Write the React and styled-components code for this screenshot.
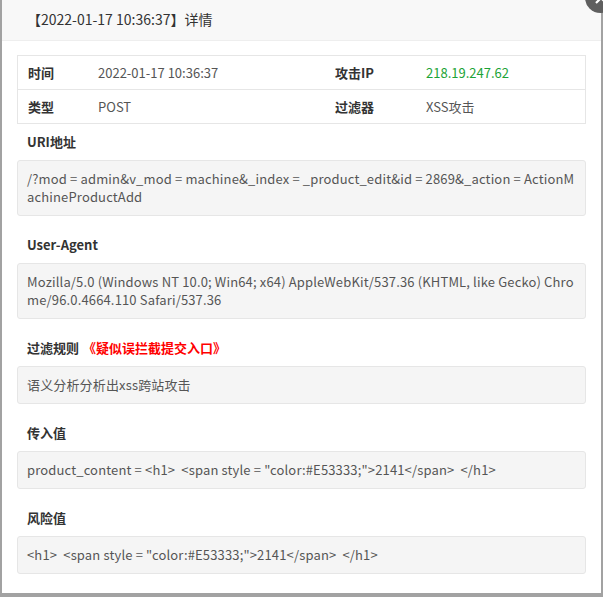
import React from "react";
import styled, { createGlobalStyle } from "styled-components";

const GlobalStyle = createGlobalStyle`
  html, body {
    margin: 0;
    padding: 0;
    background: #a2a2a2;
    font-family: "Noto Sans CJK SC", "Noto Sans", sans-serif;
    overflow: hidden;
  }
`;

const Layer = styled.div`
  position: relative;
  width: 599px;
  height: 593px;
  margin-left: 2px;
  background: #fff;
`;

const Header = styled.div`
  height: 40px;
  padding-left: 25px;
  line-height: 39px;
  font-size: 14px;
  color: #333;
  background: #f8f8f8;
  border-bottom: 1px solid #eee;
`;

const Close = styled.a`
  position: absolute;
  top: -18px;
  right: -15px;
  width: 31px;
  height: 31px;
  border-radius: 50%;
  background: #5f5f5f;
  display: flex;
  align-items: center;
  justify-content: center;
`;

const Content = styled.div`
  padding: 14px 15px;
`;

const InfoTable = styled.table`
  width: 100%;
  border-collapse: collapse;
  border: 1px solid #e6e6e6;
  font-size: 13px;
  td {
    height: 33px;
    padding: 0 10px;
    border-bottom: 1px solid #e6e6e6;
    color: #555;
  }
`;

const Th = styled.td`
  && {
    font-weight: 700;
    color: #333;
  }
`;

const Ip = styled.span`
  color: #1ca336;
`;

const Section = styled.div`
  margin-top: 11px;
  &:first-of-type {
    margin-top: 0;
  }
`;

const Label = styled.div`
  padding: 8px 10px;
  line-height: 20px;
  font-size: 13px;
  font-weight: 700;
  color: #333;
`;

const Rule = styled.span`
  margin-left: 4px;
  color: #f00;
`;

const Box = styled.div`
  padding: 9px 9px;
  line-height: 18px;
  font-size: 13px;
  letter-spacing: 0.15px;
  color: #555;
  background: #f5f5f5;
  border: 1px solid #e6e6e6;
  border-radius: 3px;
  white-space: pre-wrap;
  word-break: break-all;
`;

const sections = [
  {
    title: "URI地址",
    text: "/?mod = admin&v_mod = machine&_index = _product_edit&id = 2869&_action = ActionMachineProductAdd",
  },
  {
    title: "User-Agent",
    text: "Mozilla/5.0 (Windows NT 10.0; Win64; x64) AppleWebKit/537.36 (KHTML, like Gecko) Chrome/96.0.4664.110 Safari/537.36",
  },
  { title: "过滤规则", rule: "《疑似误拦截提交入口》", text: "语义分析分析出xss跨站攻击" },
  {
    title: "传入值",
    text: 'product_content = <h1>  <span style = "color:#E53333;">2141</span>  </h1>',
  },
  { title: "风险值", text: '<h1>  <span style = "color:#E53333;">2141</span>  </h1>' },
];

export default function App() {
  return (
    <>
      <GlobalStyle />
      <Layer>
        <Header>【2022-01-17 10:36:37】详情</Header>
        <Close>
          <svg width="12" height="12" viewBox="0 0 12 12">
            <path d="M1 1L11 11M11 1L1 11" stroke="#fff" strokeWidth="2.2" />
          </svg>
        </Close>
        <Content>
          <InfoTable>
            <tbody>
              <tr>
                <Th style={{ width: 50 }}>时间</Th>
                <td style={{ width: 217 }}>2022-01-17 10:36:37</td>
                <Th style={{ width: 71 }}>攻击IP</Th>
                <td>
                  <Ip>218.19.247.62</Ip>
                </td>
              </tr>
              <tr>
                <Th>类型</Th>
                <td>POST</td>
                <Th>过滤器</Th>
                <td>XSS攻击</td>
              </tr>
            </tbody>
          </InfoTable>
          <div>
            {sections.map((s) => (
              <Section key={s.title}>
                <Label>
                  {s.title}
                  {s.rule && <Rule>{s.rule}</Rule>}
                </Label>
                <Box>{s.text}</Box>
              </Section>
            ))}
          </div>
        </Content>
      </Layer>
    </>
  );
}
